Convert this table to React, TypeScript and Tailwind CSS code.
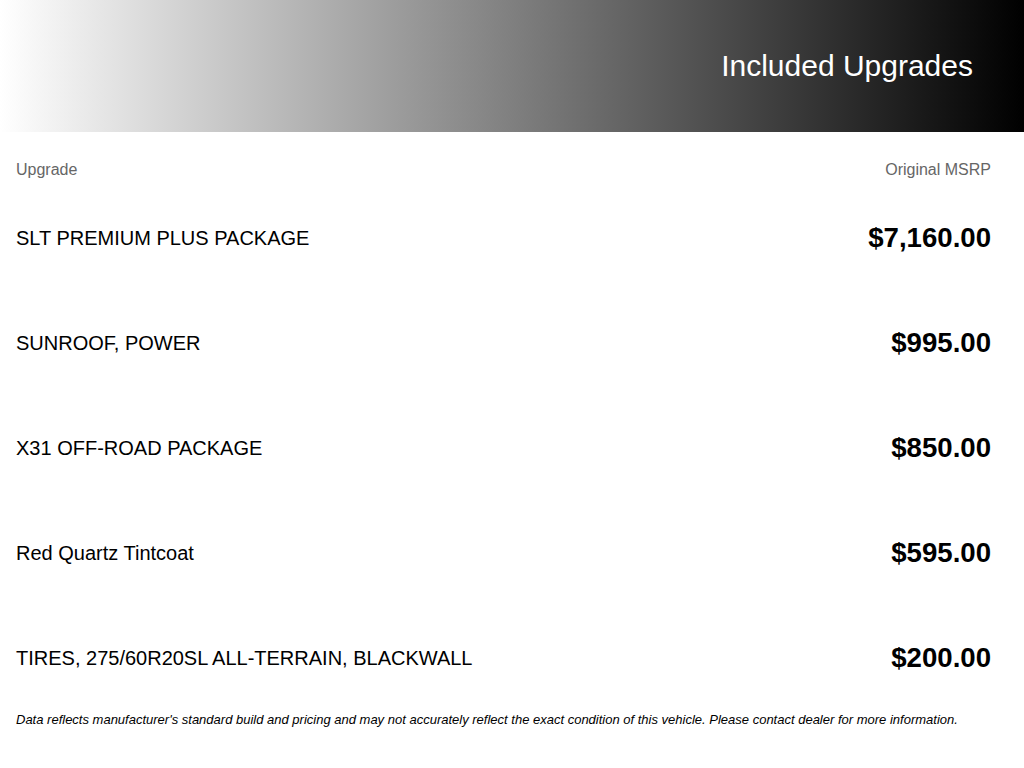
const upgrades = [
  { name: "SLT PREMIUM PLUS PACKAGE", price: "$7,160.00" },
  { name: "SUNROOF, POWER", price: "$995.00" },
  { name: "X31 OFF-ROAD PACKAGE", price: "$850.00" },
  { name: "Red Quartz Tintcoat", price: "$595.00" },
  { name: "TIRES, 275/60R20SL ALL-TERRAIN, BLACKWALL", price: "$200.00" },
];

export default function App() {
  return (
    <div className="min-h-screen bg-white font-['Liberation_Sans',Arial,sans-serif] text-black">
      <header className="h-[132px] bg-linear-to-r/srgb from-white to-black flex items-center justify-end pr-[51px]">
        <h1 className="text-[30px] leading-none text-white">Included Upgrades</h1>
      </header>

      <main className="pl-4 pr-[33px]">
        <div className="flex justify-between pt-[28px] pb-[5px] text-[16px] leading-5 text-[#666]">
          <span>Upgrade</span>
          <span>Original MSRP</span>
        </div>

        {upgrades.map((u) => (
          <div key={u.name} className="h-[105px] flex items-center justify-between">
            <span className="text-[20px]">{u.name}</span>
            <span className="text-[27.6px] font-bold">{u.price}</span>
          </div>
        ))}

        <p className="pt-[2px] text-[13px] leading-4 italic">
          Data reflects manufacturer&apos;s standard build and pricing and may not accurately reflect the exact
          condition of this vehicle. Please contact dealer for more information.
        </p>
      </main>
    </div>
  );
}
